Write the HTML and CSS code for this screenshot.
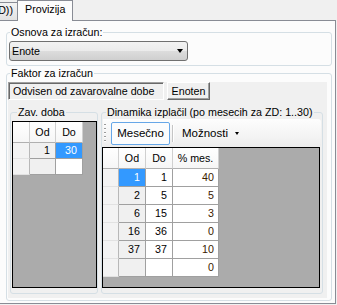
FILE: index.html
```html
<!DOCTYPE html>
<html>
<head>
<meta charset="utf-8">
<title>Provizija</title>
<link rel="stylesheet" href="styles.css">
</head>
<body>
<div class="tabstrip">
  <div class="tab-off"><span>D))</span></div>
  <div class="tab-on">Provizija</div>
  <div class="tab-fill"></div>
</div>
<div class="page">
  <div class="group g-osnova">
    <div class="gtitle">Osnova za izračun:</div>
    <div class="combo"><span>Enote</span><span class="combo-arrow"></span></div>
  </div>
  <div class="group g-faktor">
    <div class="gtitle">Faktor za izračun</div>
    <div class="itabs">
      <div class="itab-row">
        <div class="itab itab-on">Odvisen od zavarovalne dobe</div>
        <div class="itab itab-off">Enoten</div>
      </div>
      <div class="ipage">
        <div class="group g-zav">
          <div class="gtitle">Zav. doba</div>
          <div class="dgv dgv-zav">
            <div class="ch"></div><div class="ch">Od</div><div class="ch">Do</div>
            <div class="rh"></div><div class="c ro">1</div><div class="c sel">30</div>
            <div class="rh"></div><div class="c ro"></div><div class="c"></div>
          </div>
        </div>
        <div class="group g-din">
          <div class="gtitle">Dinamika izplačil (po mesecih za ZD: 1..30)</div>
          <div class="toolstrip">
            <span class="grip"></span>
            <span class="tbtn tbtn-on">Mesečno</span>
            <span class="tsep"></span>
            <span class="tbtn tbtn-dd">Možnosti<span class="dd-arrow"></span></span>
          </div>
          <div class="dgv dgv-din">
            <div class="ch"></div><div class="ch">Od</div><div class="ch">Do</div><div class="ch">% mes.</div>
            <div class="rh"></div><div class="c sel">1</div><div class="c">1</div><div class="c pct">40</div>
            <div class="rh"></div><div class="c ro">2</div><div class="c">5</div><div class="c pct">5</div>
            <div class="rh"></div><div class="c ro">6</div><div class="c">15</div><div class="c pct">3</div>
            <div class="rh"></div><div class="c ro">16</div><div class="c">36</div><div class="c pct">0</div>
            <div class="rh"></div><div class="c ro">37</div><div class="c">37</div><div class="c pct">10</div>
            <div class="rh"></div><div class="c ro"></div><div class="c"></div><div class="c pct">0</div>
          </div>
        </div>
      </div>
    </div>
  </div>
</div>
</body>
</html>
```
FILE: styles.css
```css
* { box-sizing: border-box; }
html, body { margin: 0; padding: 0; }
body {
  width: 337px;
  height: 305px;
  overflow: hidden;
  background: #f0f0f0;
  color: #000;
  font-family: "Liberation Sans", Arial, sans-serif;
  font-size: 10.7px;
  line-height: 13px;
}

/* top tab strip */
.tabstrip { display: flex; align-items: flex-end; width: 336px; height: 21px; }
.tab-off {
  width: 17px; height: 19px;
  border-top: 1px solid #898c95; border-bottom: 1px solid #898c95;
  background: linear-gradient(#f3f3f3, #e2e2e2);
  display: flex; justify-content: flex-end; align-items: flex-start;
  padding: 1px 4px 0 0; overflow: hidden; white-space: nowrap;
}
.tab-on {
  width: 56px; height: 21px;
  border: 1px solid #898c95; border-bottom: none;
  background: #fcfcfc;
  padding: 2px 0 0 7px; white-space: nowrap;
}
.tab-fill { flex: 1; border-bottom: 1px solid #898c95; }

/* tab page */
.page {
  width: 336px; height: 283px;
  border-right: 1px solid #898c95; border-bottom: 1px solid #898c95;
  background: #fcfcfc;
  padding: 11px 3px 0 6px;
}

/* group boxes */
.group { border: 1px solid #d5dfe5; border-radius: 3px; }
.gtitle { width: fit-content; margin-top: -7px; padding: 0 1px; white-space: nowrap; }
.g-osnova { height: 34px; }
.g-osnova > .gtitle, .g-faktor > .gtitle { margin-left: 3px; background: #fcfcfc; }
.g-faktor { margin-top: 7px; height: 228px; }

/* combo */
.combo {
  margin: 2px 0 0 2px; width: 179px; height: 20px;
  border: 1px solid #707070; border-radius: 3px;
  background: linear-gradient(#f2f2f2, #ebebeb 50%, #dddddd 50%, #cfcfcf);
  display: flex; align-items: center; justify-content: space-between;
  padding: 0 4px 0 2px;
}
.combo-arrow {
  width: 0; height: 0;
  border-left: 3.5px solid transparent; border-right: 3.5px solid transparent;
  border-top: 4px solid #000;
}

/* inner tab control */
.itabs { margin: 2px 0 0 1px; width: 319px; height: 216px; background: #f0f0f0; }
.itab-row { display: flex; height: 18px; }
.itab { height: 18px; display: flex; align-items: center; white-space: nowrap; }
.itab-on {
  width: 156px; padding-left: 4px;
  border-top: 1px solid #a0a0a0; border-left: 1px solid #a0a0a0;
  border-right: 1px solid #fff; border-bottom: 1px solid #fff;
  box-shadow: inset 1px 1px 0 #696969;
  background: #f0f0f0;
}
.itab-off {
  margin-left: 3px; width: 43px; justify-content: center;
  border-top: 1px solid #fff; border-left: 1px solid #fff;
  border-right: 1px solid #696969; border-bottom: 1px solid #696969;
  box-shadow: inset -1px -1px 0 #a0a0a0;
}
.ipage { display: flex; gap: 3px; height: 198px; padding: 12px 0 0 2px; }

.g-zav { width: 88px; height: 182px; }
.g-zav > .gtitle { margin-left: 6px; background: #f0f0f0; }
.g-din { width: 222px; height: 182px; }
.g-din > .gtitle { margin-left: 4px; background: #f0f0f0; }

/* toolstrip */
.toolstrip {
  margin-left: 1px; width: 218px; height: 28px;
  display: flex; align-items: center; padding-left: 1px;
  background: linear-gradient(#fdfdfd, #f4f4f4 60%, #ececec);
  border-radius: 0 3px 3px 0;
  font-size: 11.5px;
}
.grip {
  width: 2px; height: 18px; margin-right: 5px;
  background: repeating-linear-gradient(#9a9a9a 0 1px, #ffffff 1px 2px, transparent 2px 4px);
}
.tbtn { height: 23px; display: flex; align-items: center; white-space: nowrap; }
.tbtn-on {
  width: 59px; justify-content: center;
  border: 1px solid #66a7e8; border-radius: 2px;
  background: #fbfcfd;
}
.tsep { width: 2px; height: 17px; margin-left: 2px; border-left: 1px solid #c5c5c5; border-right: 1px solid #fff; }
.tbtn-dd { padding-left: 8px; }
.dd-arrow {
  margin-left: 7px; margin-top: 1px; width: 0; height: 0;
  border-left: 2.5px solid transparent; border-right: 2.5px solid transparent;
  border-top: 3px solid #000;
}

/* data grids */
.dgv {
  border: 1px solid #000; background: #ababab;
  display: grid; align-content: start; justify-content: start;
}
.dgv-zav {
  margin: 2px 0 0 1px; width: 85px; height: 167px;
  grid-template-columns: 17px 26px 27px;
  grid-template-rows: 21px 16px 16px;
}
.dgv-din {
  width: 218px; height: 141px;
  grid-template-columns: 16px 27px 27px 46px;
  grid-template-rows: 21px repeat(6, 18px);
}
.ch {
  background: linear-gradient(#ffffff, #f6f6f6);
  border-right: 1px solid #d0d0d0; border-bottom: 1px solid #b0b0b0;
  display: flex; align-items: center; justify-content: center;
  white-space: nowrap;
}
.rh {
  background: #f3f3f3;
  border-right: 1px solid #b8b8b8; border-bottom: 1px solid #e2e2e2;
}
.c {
  background: #fff;
  border-right: 1px solid #a0a0a0; border-bottom: 1px solid #a0a0a0;
  display: flex; align-items: center; justify-content: flex-end;
  padding-right: 5px;
}
.ro { background: #f0f0f0; }
.sel { background: #3399ff; color: #fff; }
.pct { padding-right: 4px; color: #3a2000; }
```
